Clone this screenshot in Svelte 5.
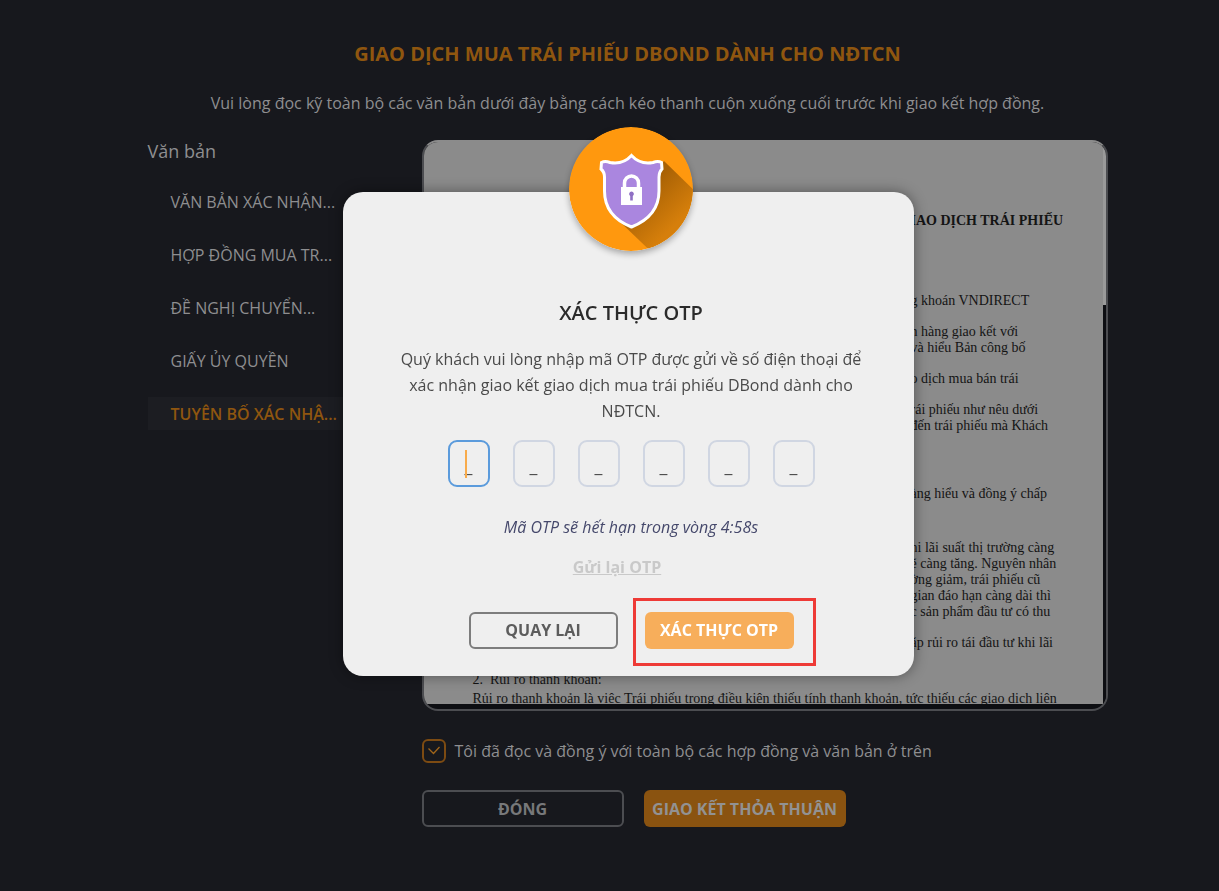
<script lang="ts">
  let documents = [
    "VĂN BẢN XÁC NHẬN...",
    "HỢP ĐỒNG MUA TR...",
    "ĐỀ NGHỊ CHUYỂN...",
    "GIẤY ỦY QUYỀN",
    "TUYÊN BỐ XÁC NHẬ...",
  ];

  let active = 4;
  let agreed = true;
  let otp = ["", "", "", "", "", ""];
</script>

<main class="page">
  <div class="container">
    <h1>GIAO DỊCH MUA TRÁI PHIẾU DBOND DÀNH CHO NĐTCN</h1>
    <p class="intro">Vui lòng đọc kỹ toàn bộ các văn bản dưới đây bằng cách kéo thanh cuộn xuống cuối trước khi giao kết hợp đồng.</p>

    <div class="columns">
      <nav class="sidebar">
        <h2>Văn bản</h2>
        {#each documents as name, i}
          <button class="doc-tab" class:active={i === active} on:click={() => (active = i)}>{name}</button>
        {/each}
      </nav>

      <section class="content">
        <div class="viewer">
          <article class="paper">
            <div class="excerpt">
              <h3>IAO DỊCH TRÁI PHIẾU</h3>
              <p>g khoán VNDIRECT</p>
              <p>n hàng giao kết với<br />và hiểu Bản công bố</p>
              <p>o dịch mua bán trái</p>
              <p>rái phiếu như nêu dưới<br />đến trái phiếu mà Khách</p>
              <p class="spaced">àng hiểu và đồng ý chấp</p>
              <p>hi lãi suất thị trường càng<br />ẽ càng tăng. Nguyên nhân<br />ờng giảm, trái phiếu cũ<br />gian đáo hạn càng dài thì<br />c sản phẩm đầu tư có thu</p>
              <p>ặp rủi ro tái đầu tư khi lãi</p>
            </div>
            <div class="closing">
              <p>2.&nbsp; Rủi ro thanh khoản:</p>
              <p>Rủi ro thanh khoản là việc Trái phiếu trong điều kiện thiếu tính thanh khoản, tức thiếu các giao dịch liên</p>
            </div>
          </article>
          <div class="track"><div class="thumb"></div></div>
        </div>

        <label class="agree">
          <input type="checkbox" bind:checked={agreed} />
          <span class="tick">
            {#if agreed}
              <svg width="14" height="10" viewBox="0 0 14 10" fill="none">
                <path d="M1.5 2.5L6.5 7.5L12.5 1" stroke="currentColor" stroke-width="1.3" />
              </svg>
            {/if}
          </span>
          Tôi đã đọc và đồng ý với toàn bộ các hợp đồng và văn bản ở trên
        </label>

        <div class="page-actions">
          <button class="btn btn-close">ĐÓNG</button>
          <button class="btn btn-sign">GIAO KẾT THỎA THUẬN</button>
        </div>
      </section>
    </div>
  </div>
</main>

<div class="overlay">
  <div class="modal" role="dialog" aria-modal="true" aria-labelledby="otp-title">
    <svg class="badge" width="124" height="124" viewBox="0 0 124 124">
      <defs>
        <clipPath id="disc"><circle cx="62" cy="62" r="62" /></clipPath>
        <linearGradient id="shade" gradientUnits="userSpaceOnUse" x1="80" y1="60" x2="112" y2="92">
          <stop offset="0" stop-color="#a96205" />
          <stop offset="1" stop-color="#d67f0b" />
        </linearGradient>
      </defs>
      <circle cx="62" cy="62" r="62" fill="#ff980e" />
      <path clip-path="url(#disc)" d="M95 34L134 72L120 140L96 138L48 92Z" fill="url(#shade)" />
      <path
        d="M62.5 28.5C57 34.500 49 37 41 35.500Q36 33.500 32.500 35.500L32 42Q35.500 45 35.500 50V64C35.500 82 45 93 62.500 100C80 93 90 82 90 64V50Q90 45 93 42L92.500 35.500Q89 33.500 84 35.500C76 37 68 34.500 62.500 28.500Z"
        fill="#aa86df"
        stroke="#fff"
        stroke-width="3"
      />
      <path d="M55.500 60V56a7 7 0 0 1 14 0V60" fill="none" stroke="#fff" stroke-width="3.500" />
      <rect x="52" y="60" width="21" height="18" fill="#fff" />
      <path d="M62.500 64.500a2.400 2.400 0 0 1 1.300 4.400V73.500h-2.600V68.900a2.400 2.400 0 0 1 1.300-4.400z" fill="#8f6fc4" />
    </svg>

    <h2 id="otp-title">XÁC THỰC OTP</h2>
    <p class="message">Quý khách vui lòng nhập mã OTP được gửi về số điện thoại để xác nhận giao kết giao dịch mua trái phiếu DBond dành cho NĐTCN.</p>

    <div class="digits">
      {#each otp as _, i}
        <div class="digit" class:focused={i === 0}>
          <input type="text" inputmode="numeric" maxlength="1" placeholder="_" aria-label="OTP {i + 1}" bind:value={otp[i]} />
        </div>
      {/each}
    </div>

    <p class="timer">Mã OTP sẽ hết hạn trong vòng 4:58s</p>
    <p class="resend"><a href="#resend">Gửi lại OTP</a></p>

    <div class="modal-actions">
      <button class="btn btn-back">QUAY LẠI</button>
      <div class="highlight">
        <button class="btn btn-verify">XÁC THỰC OTP</button>
      </div>
    </div>
  </div>
</div>

<style>
  :global(body) {
    background: #17181d;
    font-family: "Open Sans", "Noto Sans", sans-serif;
  }

  h1,
  h2,
  h3,
  p {
    margin: 0;
  }

  button {
    font-family: inherit;
    cursor: pointer;
  }

  .page {
    box-sizing: border-box;
    min-height: 100vh;
    padding: 40px 0 40px 36px;
    background: #17181d;
    color: #8e8e90;
  }

  .container {
    max-width: 960px;
    margin: 0 auto;
  }

  h1 {
    font-size: 20px;
    line-height: 28px;
    font-weight: 700;
    text-align: center;
    color: #8f560f;
  }

  .intro {
    margin-top: 24px;
    font-size: 16px;
    line-height: 22px;
    text-align: center;
  }

  .columns {
    display: grid;
    grid-template-columns: 230px 1fr;
    column-gap: 44px;
    margin-top: 26px;
  }

  .sidebar h2 {
    margin-bottom: 23px;
    font-size: 18px;
    line-height: 22px;
    font-weight: 400;
  }

  .doc-tab {
    display: block;
    width: 100%;
    height: 33px;
    margin-bottom: 20px;
    padding: 0 0 0 23px;
    border: 0;
    background: transparent;
    color: #8e8e90;
    font-size: 16px;
    font-weight: 500;
    text-align: left;
  }

  .doc-tab.active {
    background: #1c1d22;
    color: #8f560f;
    font-weight: 600;
  }

  .viewer {
    display: flex;
    box-sizing: border-box;
    height: 571px;
    padding-bottom: 5px;
    border: 2px solid #4c4d51;
    border-top-color: #8b8b8b;
    border-radius: 16px;
    background: #0d0e12;
    overflow: hidden;
  }

  .paper {
    flex: 1;
    min-width: 0;
    background: #8b8b8b;
    color: #141414;
    font-family: "Liberation Serif", serif;
    font-size: 14px;
    line-height: 16px;
    white-space: nowrap;
    overflow: hidden;
  }

  .excerpt {
    padding: 71px 0 0 487px;
  }

  .excerpt h3 {
    margin-bottom: 64px;
    font-size: 14px;
    line-height: 16px;
  }

  .excerpt p {
    margin-bottom: 15px;
  }

  .excerpt .spaced {
    margin: 52px 0 38px;
  }

  .closing {
    padding: 6px 0 0 49px;
  }

  .closing p {
    margin-bottom: 3px;
  }

  .track {
    width: 3px;
    background: #0d0e12;
  }

  .thumb {
    height: 29%;
    background: #9a9a9a;
  }

  .agree {
    display: flex;
    align-items: center;
    gap: 9px;
    margin-top: 28px;
    font-size: 16px;
    line-height: 24px;
  }

  .agree input {
    position: absolute;
    opacity: 0;
  }

  .tick {
    display: flex;
    align-items: center;
    justify-content: center;
    box-sizing: border-box;
    width: 24px;
    height: 24px;
    border: 2px solid #7d4b12;
    border-radius: 6px;
    color: #a0651a;
  }

  .page-actions {
    display: flex;
    gap: 20px;
    margin-top: 27px;
  }

  .btn {
    box-sizing: border-box;
    height: 37px;
    padding: 0;
    border: 2px solid transparent;
    border-radius: 6px;
    background: transparent;
    font-size: 16px;
    font-weight: 700;
    white-space: nowrap;
  }

  .page-actions .btn {
    width: 202px;
  }

  .btn-close {
    border-color: #4c4d51;
    color: #77787a;
  }

  .btn-sign {
    background: #8a5310;
    color: #929292;
  }

  .overlay {
    position: fixed;
    inset: 0;
    display: flex;
    align-items: center;
    justify-content: center;
    padding: 0 0 24px 38px;
  }

  .modal {
    position: relative;
    box-sizing: border-box;
    width: 571px;
    padding: 107px 48px 27px 53px;
    border-radius: 20px;
    background: #efefef;
    box-shadow: 0 0 14px rgba(0, 0, 0, 0.4);
    color: #4a4a4a;
    text-align: center;
  }

  .badge {
    position: absolute;
    top: -65px;
    left: 226px;
    border-radius: 50%;
    box-shadow: 0 3px 6px rgba(0, 0, 0, 0.3);
  }

  .modal h2 {
    font-size: 20px;
    line-height: 28px;
    font-weight: 600;
    color: #2b2b2b;
  }

  .message {
    margin-top: 19px;
    font-size: 16px;
    line-height: 26px;
  }

  .digits {
    display: flex;
    justify-content: center;
    gap: 23px;
    margin-top: 16px;
  }

  .digit {
    position: relative;
  }

  .digit input {
    box-sizing: border-box;
    display: block;
    width: 42px;
    height: 47px;
    padding: 4px 0 0;
    border: 2px solid #d0d6e2;
    border-radius: 9px;
    background: transparent;
    color: #4a4a4a;
    font-family: inherit;
    font-size: 18px;
    text-align: center;
    outline: none;
  }

  .digit input::placeholder {
    color: #4a4a4a;
    opacity: 1;
  }

  .digit.focused input {
    border-color: #5b9bdc;
  }

  .digit.focused::after {
    content: "";
    position: absolute;
    top: 10px;
    left: 17px;
    width: 2px;
    height: 28px;
    background: #f8ab4b;
  }

  .timer {
    margin-top: 28px;
    font-size: 16px;
    line-height: 24px;
    font-style: italic;
    color: #45486b;
  }

  .resend {
    margin-top: 16px;
    padding-right: 28px;
    font-size: 16px;
    line-height: 24px;
  }

  .resend a {
    color: #c9c9c9;
    font-weight: 700;
  }

  .modal-actions {
    display: flex;
    justify-content: center;
    gap: 27px;
    margin-top: 33px;
  }

  .modal-actions .btn {
    width: 149px;
  }

  .btn-back {
    border-color: #7d7d7d;
    color: #5c5c5c;
  }

  .btn-verify {
    background: #f7ae5b;
    color: #fff;
  }

  .highlight {
    position: relative;
  }

  .highlight::after {
    content: "";
    position: absolute;
    inset: -14px -22px -17px -12px;
    border: 3px solid #ee3a36;
    pointer-events: none;
  }
</style>
